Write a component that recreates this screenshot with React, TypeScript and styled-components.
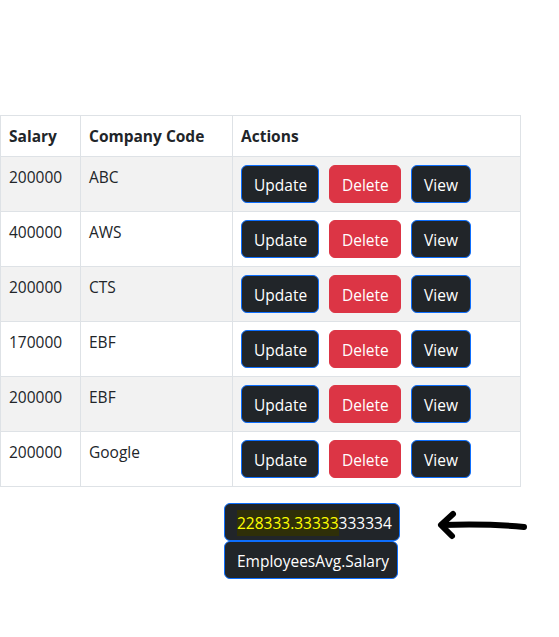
import React from "react";
import styled, { createGlobalStyle } from "styled-components";

const Global = createGlobalStyle`
  html, body { margin: 0; padding: 0; background: #fff; }
  body {
    font-family: "Open Sans", "Noto Sans", "Liberation Sans", sans-serif;
    font-size: 16px;
    line-height: 1.5;
    color: #212529;
  }
  * { box-sizing: border-box; }
`;

const Page = styled.div`
  padding-top: 115px;
  width: 559px;
`;

const Table = styled.table`
  width: 520px;
  border-collapse: collapse;
  table-layout: fixed;
  border: 1px solid #dee2e6;
`;

const Th = styled.th<{ $w: number }>`
  width: ${(p) => p.$w}px;
  text-align: left;
  font-weight: 700;
  padding: 9px 8px 8px;
  border: 1px solid #dee2e6;
  vertical-align: top;
  font-size: 15.5px;
`;

const Tr = styled.tr<{ $striped: boolean }>`
  background: ${(p) => (p.$striped ? "#f2f2f2" : "#fff")};
`;

const Td = styled.td`
  padding: 9px 8px 8px;
  border: 1px solid #dee2e6;
  vertical-align: top;
  font-size: 15.5px;
  white-space: nowrap;
`;

const Actions = styled.div`
  display: flex;
  gap: 10px;
  margin-top: -1px;
`;

const Btn = styled.button<{ $variant: "dark" | "danger"; $w?: number }>`
  font-family: inherit;
  font-size: 15.5px;
  line-height: 24px;
  height: 38px;
  padding: 7px 12px 5px;
  border-radius: 6px;
  color: #fff;
  cursor: pointer;
  white-space: nowrap;
  ${(p) => (p.$w ? `width: ${p.$w}px;` : "")}
  background: ${(p) => (p.$variant === "danger" ? "#dc3545" : "#212529")};
  border: 1px solid ${(p) => (p.$variant === "danger" ? "#dc3545" : "#0d6efd")};
`;

const Summary = styled.div`
  display: flex;
  align-items: flex-start;
  padding: 16px 0 0 224px;
`;

const Stack = styled.div`
  display: flex;
  flex-direction: column;
  align-items: flex-start;
`;

const InfoBtn = styled(Btn)`
  text-align: left;
`;

const Highlight = styled.span`
  color: #ffff00;
  background: #2f2f08;
  padding: 2px 0;
`;

const ArrowBox = styled.div`
  margin-left: 34px;
  margin-top: 4px;
  width: 96px;
  height: 34px;
`;

const rows = [
  { salary: "200000", code: "ABC" },
  { salary: "400000", code: "AWS" },
  { salary: "200000", code: "CTS" },
  { salary: "170000", code: "EBF" },
  { salary: "200000", code: "EBF" },
  { salary: "200000", code: "Google" },
];

export default function App() {
  return (
    <>
      <Global />
      <Page>
        <Table>
          <thead>
            <tr>
              <Th $w={80}>Salary</Th>
              <Th $w={152}>Company Code</Th>
              <Th $w={288}>Actions</Th>
            </tr>
          </thead>
          <tbody>
            {rows.map((r, i) => (
              <Tr key={i} $striped={i % 2 === 0}>
                <Td>{r.salary}</Td>
                <Td>{r.code}</Td>
                <Td>
                  <Actions>
                    <Btn $variant="dark" $w={78}>Update</Btn>
                    <Btn $variant="danger" $w={72}>Delete</Btn>
                    <Btn $variant="dark" $w={60}>View</Btn>
                  </Actions>
                </Td>
              </Tr>
            ))}
          </tbody>
        </Table>
        <Summary>
          <Stack>
            <InfoBtn $variant="dark" $w={176}>
              <Highlight>228333.33333</Highlight>333334
            </InfoBtn>
            <InfoBtn $variant="dark" $w={174}>EmployeesAvg.Salary</InfoBtn>
          </Stack>
          <ArrowBox>
            <svg width="96" height="34" viewBox="0 0 96 34">
              <path
                d="M90 20 C70 18 40 17 8 18"
                fill="none"
                stroke="#000"
                strokeWidth="6"
                strokeLinecap="round"
              />
              <path
                d="M19 7 L7 18 L18 29"
                fill="none"
                stroke="#000"
                strokeWidth="6"
                strokeLinecap="round"
                strokeLinejoin="round"
              />
            </svg>
          </ArrowBox>
        </Summary>
      </Page>
    </>
  );
}
